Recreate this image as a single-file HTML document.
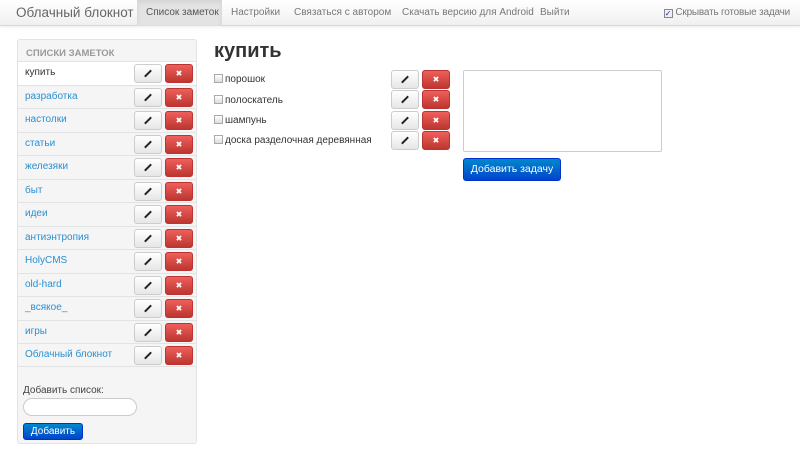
<!DOCTYPE html>
<html><head><meta charset="utf-8"><style>
*{box-sizing:border-box;margin:0;padding:0}
body{width:800px;height:455px;background:#fff;font-family:"Liberation Sans",sans-serif;font-size:11px;color:#333;position:relative;overflow:hidden}
.nav{position:absolute;left:0;top:0;width:800px;height:26px;background:linear-gradient(#fff,#f0f0f0);border-bottom:1px solid #d8d8d8;box-shadow:0 1px 3px rgba(0,0,0,.08)}
.nav span{position:absolute;top:7px;color:#777;font-size:10px;white-space:nowrap}
.brand{left:16px;top:5px!important;font-size:13.5px!important;color:#666!important}
.act{position:absolute;left:137px;top:0;width:85px;height:26px;background:#e3e3e3;box-shadow:inset 0 2px 5px rgba(0,0,0,.08)}
.side{position:absolute;left:17px;top:39px;width:180px;height:405px;background:#f5f5f5;border:1px solid #e3e3e3;border-radius:3px}
.hdr{position:absolute;left:8px;top:8px;font-size:9.5px;font-weight:bold;color:#999}
.row{position:absolute;left:0;width:178px;height:23.5px;border-top:1px solid #e3e3e3}
.row a{position:absolute;left:7px;top:5px;color:#2a8fd0;font-size:10px;white-space:nowrap}
.row.on{background:#fff}.row.on a{color:#333}
.be,.bd{position:absolute;width:28px;height:19px;border-radius:3px}
.be{background:linear-gradient(#fff,#e6e6e6);border:1px solid #ccc}
.bd{background:linear-gradient(#ee5f5b,#bd362f);border:1px solid #b33}
.be:after{content:"";position:absolute;left:12px;top:4px;width:2px;height:9px;background:#222;transform:rotate(45deg)}
.bd:after{content:"✖";position:absolute;left:0;width:26px;top:4px;text-align:center;color:#fff;font-size:8px;line-height:9px}
.task{position:absolute;left:214px;font-size:10px;color:#333;white-space:nowrap}
.task i{display:inline-block;width:9px;height:9px;border:1px solid #aaa;background:linear-gradient(#fff,#ddd);margin-right:2px;vertical-align:-1px}
.btnp{position:absolute;background:linear-gradient(#08c,#0044cc);border:1px solid #03c;border-radius:3px;color:#fff;text-align:center;white-space:nowrap}
</style></head><body>
<div class="nav"><div class="act"></div>
<span class="brand">Облачный блокнот</span>
<span style="left:146px;color:#555">Список заметок</span>
<span style="left:231px">Настройки</span>
<span style="left:294px">Связаться с автором</span>
<span style="left:402px">Скачать версию для Android</span>
<span style="left:540px">Выйти</span>
<span style="right:10px;letter-spacing:-0.2px"><i style="display:inline-block;width:9px;height:9px;border:1px solid #888;background:#eef;vertical-align:-1px;font-size:8px;line-height:7px;color:#237;font-style:normal">✓</i> Скрывать готовые задачи</span>
</div>
<div class="side">
<div class="hdr">СПИСКИ ЗАМЕТОК</div>
<div class="row on" style="top:21px"><a>купить</a><div class="be" style="left:116px;top:2px"></div><div class="bd" style="left:147px;top:2px"></div></div>
<div class="row" style="top:44.5px"><a>разработка</a><div class="be" style="left:116px;top:2px"></div><div class="bd" style="left:147px;top:2px"></div></div>
<div class="row" style="top:68px"><a>настолки</a><div class="be" style="left:116px;top:2px"></div><div class="bd" style="left:147px;top:2px"></div></div>
<div class="row" style="top:91.5px"><a>статьи</a><div class="be" style="left:116px;top:2px"></div><div class="bd" style="left:147px;top:2px"></div></div>
<div class="row" style="top:115px"><a>железяки</a><div class="be" style="left:116px;top:2px"></div><div class="bd" style="left:147px;top:2px"></div></div>
<div class="row" style="top:138.5px"><a>быт</a><div class="be" style="left:116px;top:2px"></div><div class="bd" style="left:147px;top:2px"></div></div>
<div class="row" style="top:162px"><a>идеи</a><div class="be" style="left:116px;top:2px"></div><div class="bd" style="left:147px;top:2px"></div></div>
<div class="row" style="top:185.5px"><a>антиэнтропия</a><div class="be" style="left:116px;top:2px"></div><div class="bd" style="left:147px;top:2px"></div></div>
<div class="row" style="top:209px"><a>HolyCMS</a><div class="be" style="left:116px;top:2px"></div><div class="bd" style="left:147px;top:2px"></div></div>
<div class="row" style="top:232.5px"><a>old-hard</a><div class="be" style="left:116px;top:2px"></div><div class="bd" style="left:147px;top:2px"></div></div>
<div class="row" style="top:256px"><a>_всякое_</a><div class="be" style="left:116px;top:2px"></div><div class="bd" style="left:147px;top:2px"></div></div>
<div class="row" style="top:279.5px"><a>игры</a><div class="be" style="left:116px;top:2px"></div><div class="bd" style="left:147px;top:2px"></div></div>
<div class="row" style="top:303px;border-bottom:1px solid #e3e3e3"><a>Облачный блокнот</a><div class="be" style="left:116px;top:2px"></div><div class="bd" style="left:147px;top:2px"></div></div>
<div style="position:absolute;left:5px;top:345px;font-size:10px;color:#444">Добавить список:</div>
<div style="position:absolute;left:5px;top:358px;width:114px;height:18px;background:#fff;border:1px solid #ccc;border-radius:9px"></div>
<div class="btnp" style="left:5px;top:383px;width:60px;height:17px;font-size:10px;line-height:15px">Добавить</div>
</div>
<div style="position:absolute;left:214px;top:40px;font-size:20px;font-weight:bold;color:#333">купить</div>
<div class="task" style="top:74px"><i></i>порошок</div>
<div class="task" style="top:95px"><i></i>полоскатель</div>
<div class="task" style="top:115px"><i></i>шампунь</div>
<div class="task" style="top:135px"><i></i>доска разделочная деревянная</div>
<div class="be" style="left:391px;top:70px"></div><div class="bd" style="left:422px;top:70px"></div>
<div class="be" style="left:391px;top:90px"></div><div class="bd" style="left:422px;top:90px"></div>
<div class="be" style="left:391px;top:111px"></div><div class="bd" style="left:422px;top:111px"></div>
<div class="be" style="left:391px;top:131px"></div><div class="bd" style="left:422px;top:131px"></div>
<div style="position:absolute;left:463px;top:70px;width:199px;height:82px;border:1px solid #ccc;border-radius:2px;background:#fff"></div>
<div class="btnp" style="left:463px;top:158px;width:98px;height:23px;font-size:10.5px;line-height:21px">Добавить задачу</div>
</body></html>
